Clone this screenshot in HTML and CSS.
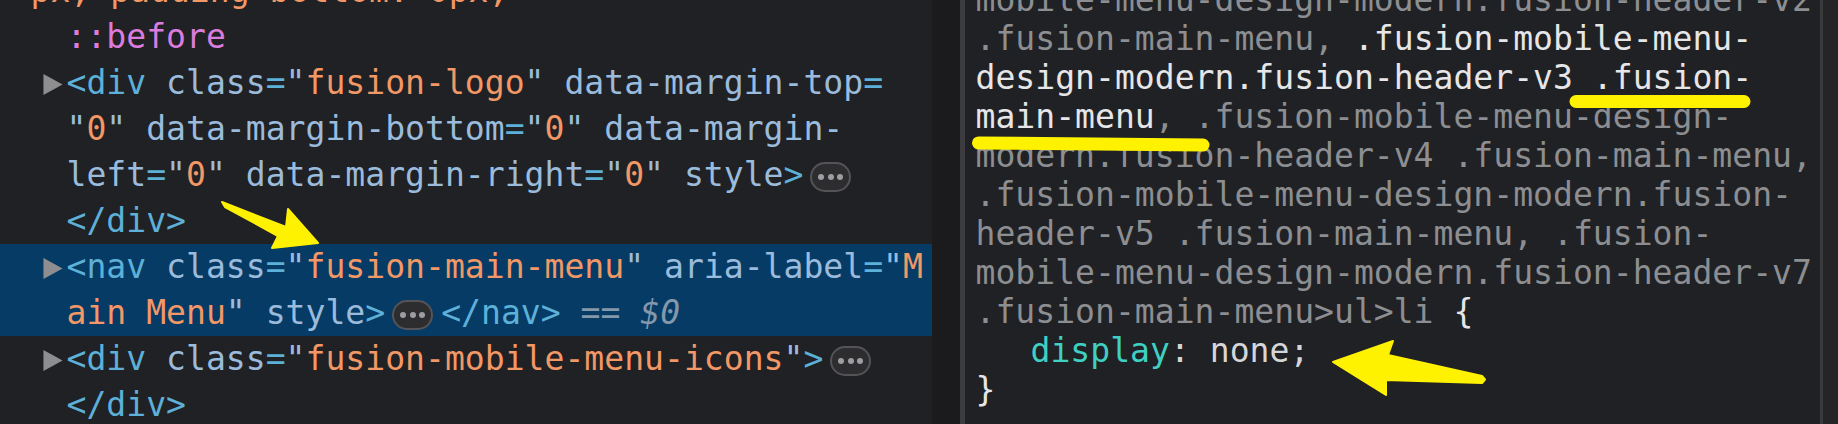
FILE: index.html
```html
<!DOCTYPE html>
<html lang="en">
<head>
<meta charset="utf-8">
<title>DevTools – fusion-main-menu</title>
<link rel="stylesheet" href="styles.css">
</head>
<body>
<div class="screen">
  <section class="elements">
    <div class="tree">
      <div class="line cont"><span class="val">px; padding-bottom: 0px;</span></div>
      <div class="row">
        <span class="tri-slot"></span>
        <div class="lines"><div class="line"><span class="pseudo">::before</span></div></div>
      </div>
      <div class="row">
        <span class="tri-slot"><svg class="tri" viewBox="0 0 20 22"><polygon points="0,0 20,11 0,22"/></svg></span>
        <div class="lines">
          <div class="line"><span class="tag">&lt;div</span> <span class="attr">class</span><span class="tag">=</span><span class="q">"</span><span class="val">fusion-logo</span><span class="q">"</span> <span class="attr">data-margin-top</span><span class="tag">=</span></div>
          <div class="line"><span class="q">"</span><span class="val">0</span><span class="q">"</span> <span class="attr">data-margin-bottom</span><span class="tag">=</span><span class="q">"</span><span class="val">0</span><span class="q">"</span> <span class="attr">data-margin-</span></div>
          <div class="line"><span class="attr">left</span><span class="tag">=</span><span class="q">"</span><span class="val">0</span><span class="q">"</span> <span class="attr">data-margin-right</span><span class="tag">=</span><span class="q">"</span><span class="val">0</span><span class="q">"</span> <span class="attr">style</span><span class="tag">&gt;</span><span class="more"><i></i><i></i><i></i></span></div>
          <div class="line"><span class="tag">&lt;/div&gt;</span></div>
        </div>
      </div>
      <div class="row selected">
        <span class="tri-slot"><svg class="tri" viewBox="0 0 20 22"><polygon points="0,0 20,11 0,22"/></svg></span>
        <div class="lines">
          <div class="line"><span class="tag">&lt;nav</span> <span class="attr">class</span><span class="tag">=</span><span class="q">"</span><span class="val">fusion-main-menu</span><span class="q">"</span> <span class="attr">aria-label</span><span class="tag">=</span><span class="q">"</span><span class="val">M</span></div>
          <div class="line"><span class="val">ain Menu</span><span class="q">"</span> <span class="attr">style</span><span class="tag">&gt;</span><span class="more"><i></i><i></i><i></i></span><span class="tag after-more">&lt;/nav&gt;</span> <span class="eq">==</span> <span class="dollar">$0</span></div>
        </div>
      </div>
      <div class="row">
        <span class="tri-slot"><svg class="tri" viewBox="0 0 20 22"><polygon points="0,0 20,11 0,22"/></svg></span>
        <div class="lines">
          <div class="line"><span class="tag">&lt;div</span> <span class="attr">class</span><span class="tag">=</span><span class="q">"</span><span class="val">fusion-mobile-menu-icons</span><span class="q">"</span><span class="tag">&gt;</span><span class="more"><i></i><i></i><i></i></span></div>
          <div class="line"><span class="tag">&lt;/div&gt;</span></div>
        </div>
      </div>
    </div>
  </section>
  <div class="split"></div>
  <div class="split-line"></div>
  <section class="styles">
    <div class="rule">
      <div class="line"><span class="dim">mobile-menu-design-modern.fusion-header-v2</span></div>
      <div class="line"><span class="dim">.fusion-main-menu, </span><span class="hit">.fusion-mobile-menu-</span></div>
      <div class="line"><span class="hit">design-modern.fusion-header-v3 .fusion-</span></div>
      <div class="line"><span class="hit">main-menu</span><span class="dim">, .fusion-mobile-menu-design-</span></div>
      <div class="line"><span class="dim">modern.fusion-header-v4 .fusion-main-menu,</span></div>
      <div class="line"><span class="dim">.fusion-mobile-menu-design-modern.fusion-</span></div>
      <div class="line"><span class="dim">header-v5 .fusion-main-menu, .fusion-</span></div>
      <div class="line"><span class="dim">mobile-menu-design-modern.fusion-header-v7</span></div>
      <div class="line"><span class="dim">.fusion-main-menu&gt;ul&gt;li</span><span class="hit"> {</span></div>
      <div class="line prop"><span class="pname">display</span><span class="punct">: </span><span class="pval">none</span><span class="punct">;</span></div>
      <div class="line"><span class="hit">}</span></div>
    </div>
  </section>
  <div class="edge-line"></div>
  <div class="edge"></div>
</div>
<svg class="annot" viewBox="0 0 1838 424" width="1838" height="424" aria-hidden="true">
  <g fill="#fff200" stroke="#fff200" stroke-linejoin="round">
    <polygon stroke-width="2" points="222,202 286,227 288,209 318,243 272,248 278,236 225,207"/>
    <polygon stroke-width="2" points="1333,362 1393,341 1388,355 1482,376 1485,379.5 1482,383 1386,380 1386,395"/>
  </g>
  <g stroke="#fff200" stroke-width="13" stroke-linecap="round" fill="none">
    <line x1="1576" y1="101.5" x2="1744" y2="101.5"/>
    <line x1="978.5" y1="143" x2="1203" y2="145"/>
  </g>
</svg>
</body>
</html>
```

FILE: styles.css
```css
html, body {
  margin: 0;
  padding: 0;
  background: #202124;
}
body {
  width: 1838px;
  height: 424px;
  overflow: hidden;
  position: relative;
  font-family: "DejaVu Sans Mono", "Liberation Mono", monospace;
  font-size: 33.1px;
}
.screen {
  display: flex;
  width: 1838px;
  height: 424px;
  overflow: hidden;
}
.elements {
  width: 932px;
  flex: none;
  background: #202124;
  overflow: hidden;
}
.tree {
  margin-top: -32px;
}
.line {
  height: 46px;
  line-height: 46px;
  white-space: pre;
}
.cont {
  padding-left: 30.5px;
}
.row {
  display: flex;
  padding-left: 43px;
}
.row.selected {
  background: #063b66;
}
.tri-slot {
  width: 23.5px;
  flex: none;
  height: 46px;
  display: flex;
  align-items: center;
}
.tri {
  width: 20px;
  height: 21px;
  fill: #8e8e90;
  margin-top: 2px;
}
.tag { color: #5db0d7; }
.attr { color: #9bbbdc; }
.q { color: #9bbbdc; }
.val { color: #f29766; }
.pseudo { color: #dc7cdc; }
.eq { color: #8498ab; }
.dollar { color: #8498ab; font-style: italic; }
.more {
  display: inline-flex;
  align-items: center;
  justify-content: center;
  gap: 3.5px;
  box-sizing: border-box;
  width: 41px;
  height: 30px;
  margin-left: 7px;
  border: 2px solid #545458;
  border-radius: 15px;
  background: #2d2d30;
  vertical-align: middle;
}
.more i {
  display: block;
  width: 6px;
  height: 6px;
  border-radius: 50%;
  background: #9d9da2;
}
.after-more {
  margin-left: 8px;
}
.split {
  width: 28px;
  flex: none;
  background: #1b1b1d;
}
.split-line {
  width: 5px;
  flex: none;
  background: #3c3c3f;
}
.styles {
  flex: 1;
  background: #202124;
  overflow: hidden;
  padding-left: 10.5px;
}
.rule {
  margin-top: -20px;
}
.rule .line {
  height: 39px;
  line-height: 39px;
}
.dim { color: #8c8e92; }
.hit { color: #e6e6e8; }
.prop { padding-left: 55px; }
.pname { color: #3fd0c3; }
.punct { color: #d6d6d8; }
.pval { color: #d6d6d8; }
.edge-line {
  width: 3px;
  flex: none;
  background: #3a3a3d;
}
.edge {
  width: 15px;
  flex: none;
  background: #252528;
}
.annot {
  position: absolute;
  left: 0;
  top: 0;
  pointer-events: none;
}
```
